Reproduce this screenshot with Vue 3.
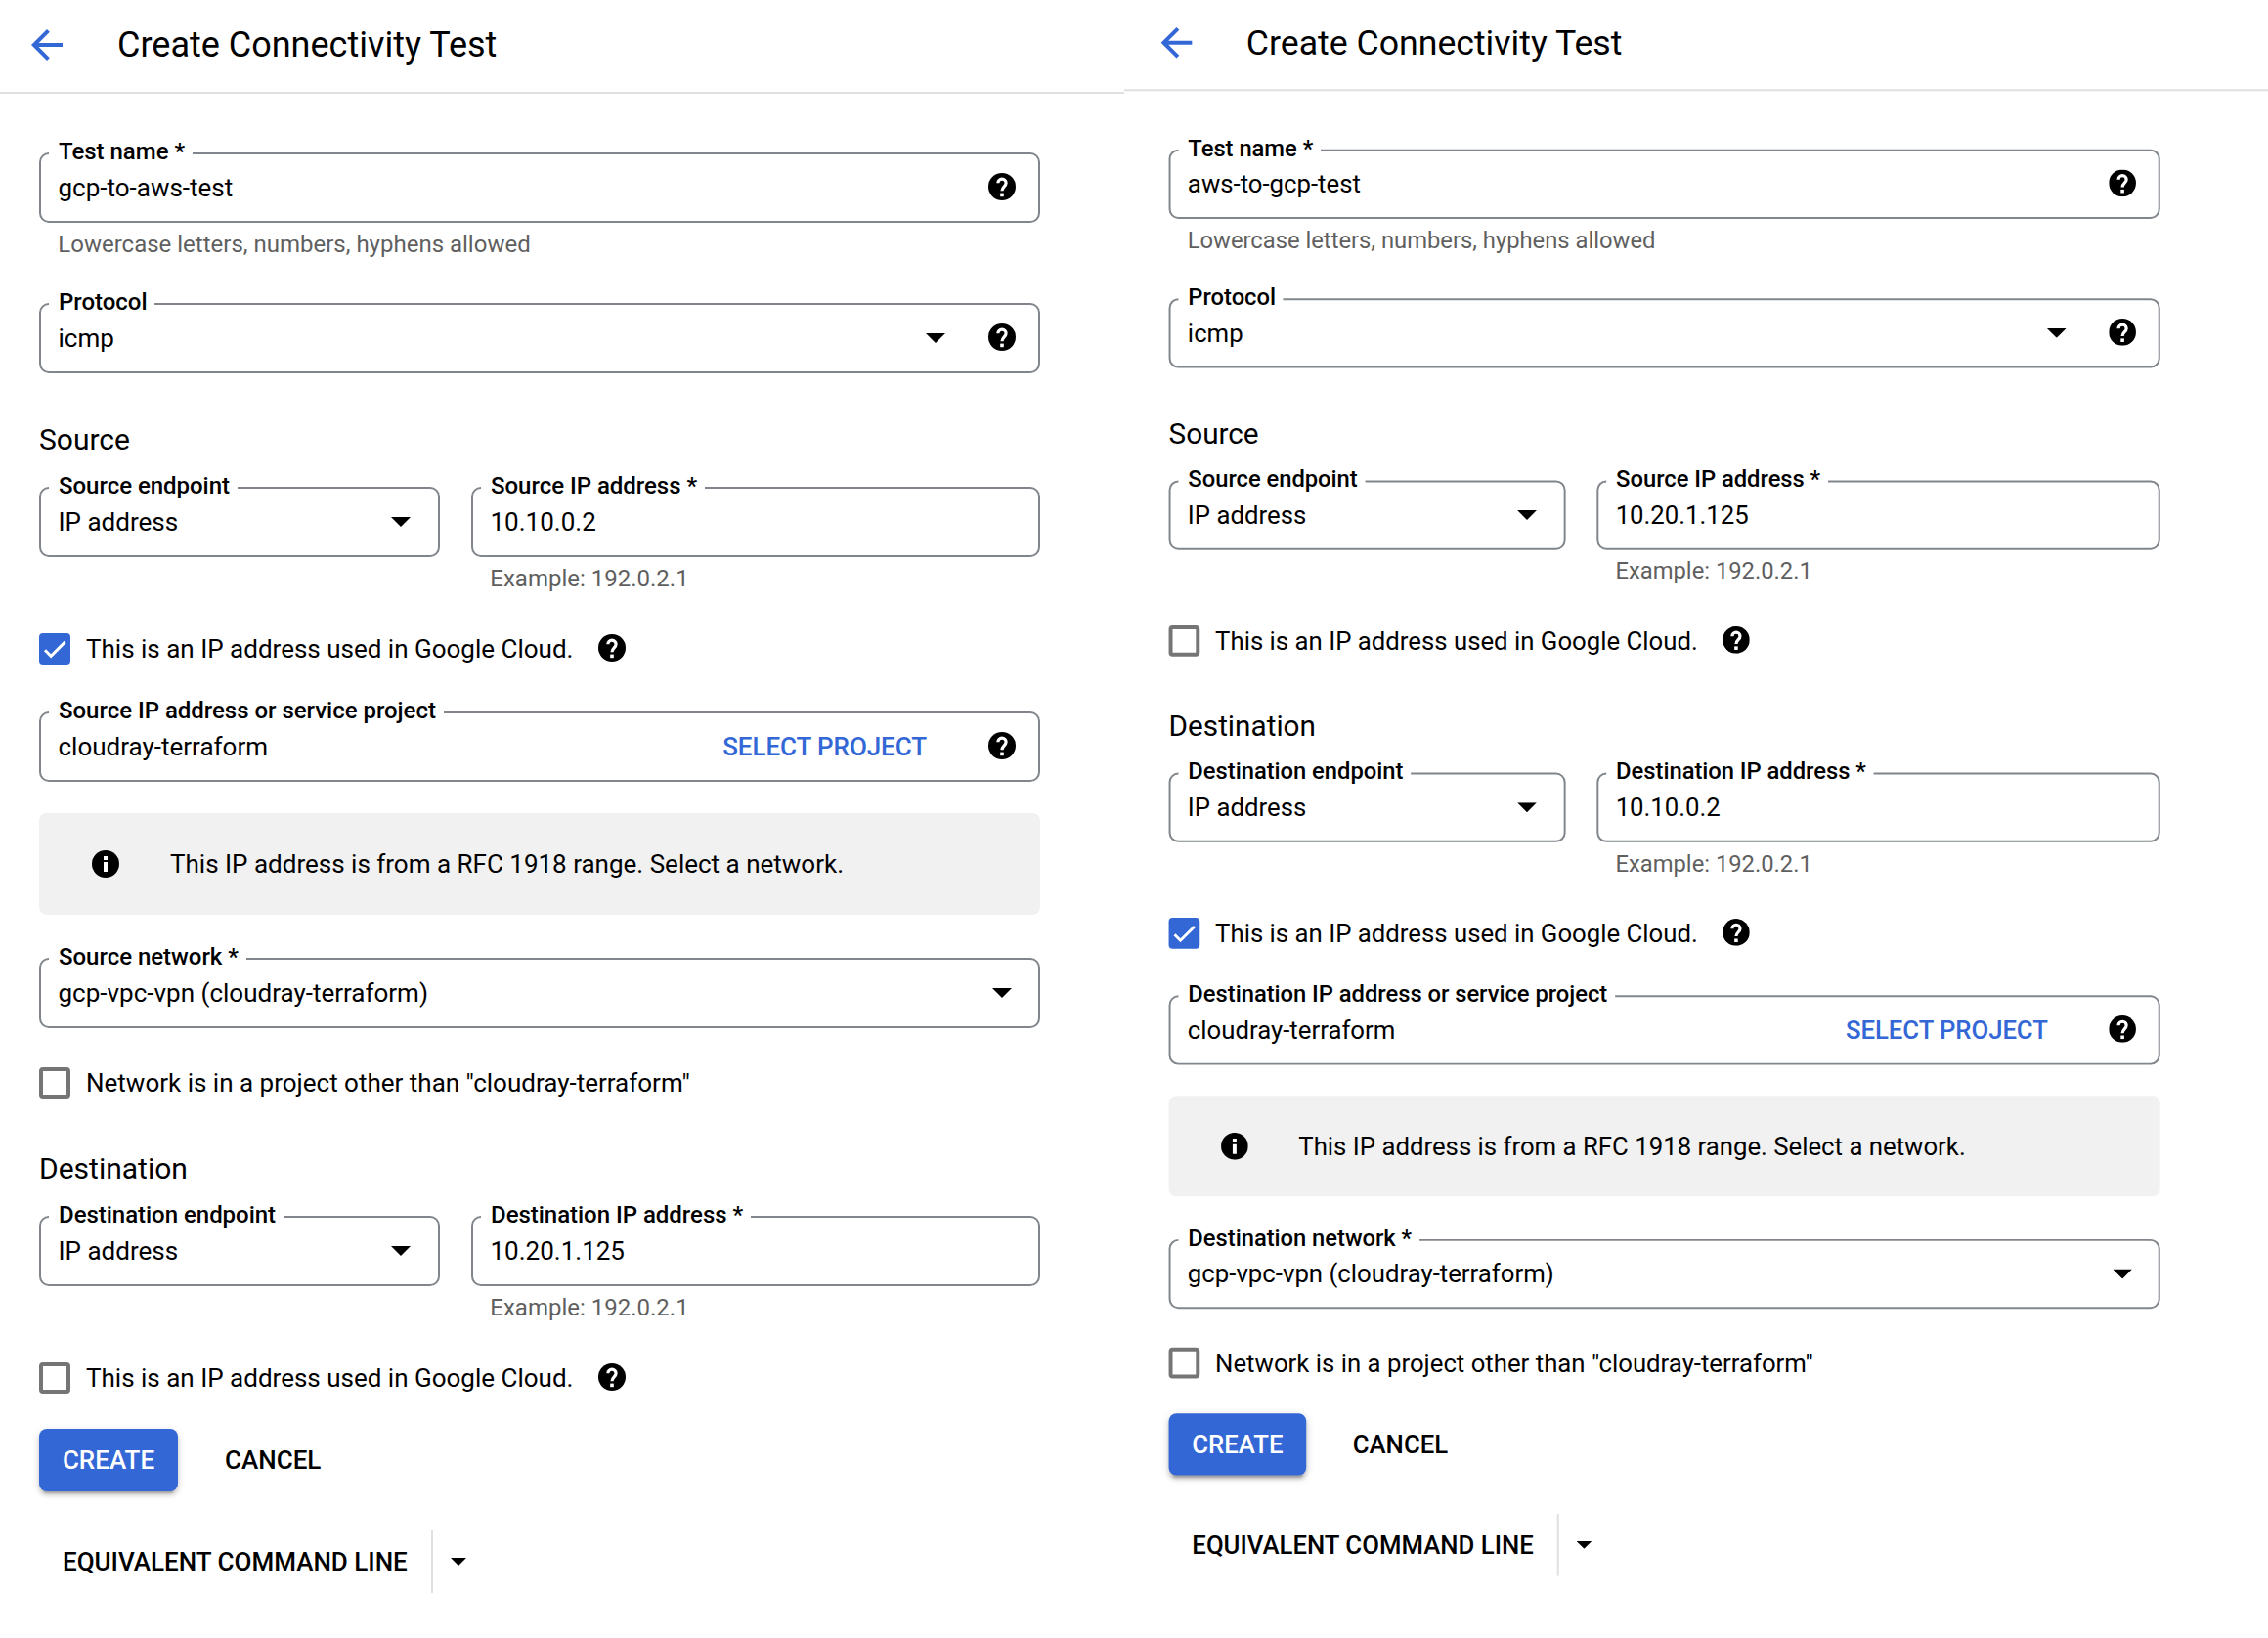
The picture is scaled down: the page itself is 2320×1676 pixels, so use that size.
<script setup>
import { h } from 'vue'

const HelpIcon = () =>
  h('svg', { viewBox: '0 0 28 28', width: 28, height: 28, style: 'display:block;flex:none' }, [
    h('circle', { cx: 14, cy: 14, r: 14, fill: '#000' }),
    h('path', {
      d: 'M9.9 10.3a4.1 4.1 0 0 1 8.2 0c0 3.3-4.1 3.9-4.1 7.9',
      fill: 'none',
      stroke: '#fff',
      'stroke-width': 3.2
    }),
    h('rect', { x: 12.2, y: 20.6, width: 3.6, height: 3.6, fill: '#fff' })
  ])

const field = (label, value, extra = {}) => ({ type: 'field', label, value, ...extra })
const endpoint = (side, ip) => ({ type: 'endpoint', side, ip })
const googleIp = (checked) => ({
  type: 'check',
  text: 'This is an IP address used in Google Cloud.',
  checked,
  help: true,
  after: 'group'
})
const networkRows = (side) => [
  field(`${side} IP address or service project`, 'cloudray-terraform', {
    select: true,
    help: true,
    after: 'check'
  }),
  { type: 'info', text: 'This IP address is from a RFC 1918 range. Select a network.' },
  field(`${side} network *`, 'gcp-vpc-vpn (cloudray-terraform)', { caret: true, after: 'info' }),
  {
    type: 'check',
    text: 'Network is in a project other than "cloudray-terraform"',
    checked: false,
    after: 'field'
  }
]
const baseRows = (name) => [
  field('Test name *', name, {
    help: true,
    hint: 'Lowercase letters, numbers, hyphens allowed',
    after: 'header'
  }),
  field('Protocol', 'icmp', { caret: true, help: true, after: 'hint' })
]

const panels = [
  {
    id: 'left',
    rows: [
      ...baseRows('gcp-to-aws-test'),
      { type: 'heading', text: 'Source', after: 'field' },
      endpoint('Source', '10.10.0.2'),
      googleIp(true),
      ...networkRows('Source'),
      { type: 'heading', text: 'Destination', after: 'check' },
      endpoint('Destination', '10.20.1.125'),
      googleIp(false)
    ]
  },
  {
    id: 'right',
    rows: [
      ...baseRows('aws-to-gcp-test'),
      { type: 'heading', text: 'Source', after: 'field' },
      endpoint('Source', '10.20.1.125'),
      googleIp(false),
      { type: 'heading', text: 'Destination', after: 'check' },
      endpoint('Destination', '10.10.0.2'),
      googleIp(true),
      ...networkRows('Destination')
    ]
  }
]
</script>

<template>
  <main class="page">
    <section v-for="panel in panels" :key="panel.id" class="panel" :class="panel.id">
      <div class="sheet">
        <header class="header">
          <svg class="back" viewBox="0 0 24 24" width="48" height="48">
            <path fill="#3367d6" d="M20 11H7.83l5.59-5.59L12 4l-8 8 8 8 1.41-1.41L7.83 13H20v-2z" />
          </svg>
          <h1>Create Connectivity Test</h1>
        </header>

        <div class="form">
          <template v-for="(row, i) in panel.rows" :key="i">
            <div v-if="row.type === 'field'" class="row" :class="'after-' + row.after">
              <div class="field">
                <label>{{ row.label }}</label>
                <span class="value">{{ row.value }}</span>
                <span v-if="row.select" class="select-project">SELECT PROJECT</span>
                <svg v-if="row.caret" class="caret" viewBox="0 0 20 10" width="20" height="10">
                  <path d="M0 0h20L10 10z" />
                </svg>
                <HelpIcon v-if="row.help" class="help" />
              </div>
              <p v-if="row.hint" class="hint">{{ row.hint }}</p>
            </div>

            <h2 v-else-if="row.type === 'heading'" :class="'after-' + row.after">{{ row.text }}</h2>

            <div v-else-if="row.type === 'endpoint'" class="pair">
              <div class="field kind">
                <label>{{ row.side }} endpoint</label>
                <span class="value">IP address</span>
                <svg class="caret" viewBox="0 0 20 10" width="20" height="10">
                  <path d="M0 0h20L10 10z" />
                </svg>
              </div>
              <div class="address">
                <div class="field">
                  <label>{{ row.side }} IP address *</label>
                  <span class="value">{{ row.ip }}</span>
                </div>
                <p class="hint">Example: 192.0.2.1</p>
              </div>
            </div>

            <div v-else-if="row.type === 'check'" class="check" :class="'after-' + row.after">
              <span class="box" :class="{ on: row.checked }">
                <svg v-if="row.checked" viewBox="0 0 32 32" width="32" height="32">
                  <path d="M6 17.3l6.1 6.1L26.6 8.9" fill="none" stroke="#fff" stroke-width="2.9" />
                </svg>
              </span>
              <span class="check-text">{{ row.text }}</span>
              <HelpIcon v-if="row.help" class="help" />
            </div>

            <div v-else class="info">
              <svg viewBox="0 0 28 28" width="28" height="28">
                <circle cx="14" cy="14" r="14" />
                <path fill="#fff" d="M12 6h4v4h-4zM12 12h4v10h-4z" />
              </svg>
              <span>{{ row.text }}</span>
            </div>
          </template>

          <div class="actions">
            <span class="create">CREATE</span>
            <span class="cancel">CANCEL</span>
          </div>
          <div class="command">
            <span class="command-text">EQUIVALENT COMMAND LINE</span>
            <svg viewBox="0 0 16 8" width="16" height="8"><path d="M0 0h16L8 8z" /></svg>
          </div>
        </div>
      </div>
    </section>
  </main>
</template>

<style>
body {
  margin: 0;
  background: #fff;
}
</style>

<style scoped>
.page {
  display: flex;
  width: 2320px;
  height: 1676px;
  overflow: hidden;
  background: #fff;
  color: #000;
  font: 400 26px/40px Roboto, sans-serif;
  white-space: nowrap;
}
.panel {
  flex: none;
  overflow: hidden;
}
.left {
  width: 1150px;
}
.right {
  width: 1170px;
}
.sheet {
  --inset: 0px;
  width: 1150px;
}
.right .sheet {
  --inset: 6px;
  width: 1182px;
  transform: translateY(-1.8px) scale(0.9904);
  transform-origin: 0 0;
}
.header {
  display: flex;
  align-items: center;
  box-sizing: border-box;
  height: 96px;
  padding: 0 0 2px calc(24px + var(--inset));
  border-bottom: 2px solid #e0e0e0;
}
.back {
  flex: none;
  margin-right: 48px;
}
h1,
h2,
p {
  margin: 0;
  font-weight: 400;
}
h1 {
  font-size: 36px;
  line-height: 48px;
}
h2 {
  font-size: 30px;
  line-height: 30px;
}
h2.after-field {
  margin-top: 53px;
}
h2.after-check {
  margin-top: 57px;
}
.form {
  width: 1024px;
  padding-left: calc(40px + var(--inset));
}
.row.after-header {
  padding-top: 60px;
}
.row.after-hint,
.row.after-check {
  margin-top: 48px;
}
.row.after-info {
  margin-top: 44px;
}
.field {
  position: relative;
  display: flex;
  align-items: center;
  box-sizing: border-box;
  height: 72px;
  padding: 0 23px 0 17.5px;
  border: 2px solid #80868b;
  border-radius: 10px;
}
.field label {
  position: absolute;
  top: -15px;
  left: 8px;
  padding: 0 8px 0 10px;
  background: #fff;
  font-size: 24px;
  font-weight: 500;
  line-height: 24px;
  letter-spacing: -0.03px;
}
.value {
  flex: 1;
}
.select-project {
  margin-right: 63px;
  color: #3367d6;
  font-weight: 500;
  letter-spacing: -0.08px;
}
.help {
  position: relative;
  top: -1px;
}
.caret {
  flex: none;
  margin-right: 4px;
}
.caret:has(+ .help) {
  margin-right: 44px;
}
.hint {
  margin-top: 10px;
  padding-left: 19.3px;
  color: #5f5f5f;
  font-size: 24px;
  line-height: 24px;
}
.pair {
  display: flex;
  gap: 32px;
  margin-top: 33px;
}
.kind {
  flex: none;
  width: 410px;
  padding-right: 24px;
}
.address {
  flex: 1;
}
.check {
  display: flex;
  align-items: center;
  height: 32px;
}
.check.after-group {
  margin-top: 44px;
}
.check.after-field {
  margin-top: 40px;
}
.box {
  box-sizing: border-box;
  width: 32px;
  height: 32px;
  margin-right: 16px;
  border: 4px solid #757575;
  border-radius: 4px;
}
.box.on {
  border: 0;
  background: #3367d6;
}
.box svg,
.info svg,
.command svg {
  display: block;
  flex: none;
}
.check-text {
  margin-right: 26px;
}
.info {
  display: flex;
  align-items: center;
  gap: 52px;
  box-sizing: border-box;
  height: 104px;
  margin-top: 32px;
  padding-left: 54px;
  border-radius: 8px;
  background: #f1f1f1;
}
.actions,
.command {
  display: flex;
  align-items: center;
  height: 64px;
  font-weight: 500;
  line-height: 64px;
}
.actions {
  margin-top: 36px;
}
.create {
  width: 142px;
  border-radius: 8px;
  background: #3367d6;
  box-shadow:
    0 6px 2px -4px rgba(0, 0, 0, 0.2),
    0 4px 4px rgba(0, 0, 0, 0.14),
    0 2px 10px rgba(0, 0, 0, 0.12);
  color: #fff;
  text-align: center;
}
.cancel {
  margin-left: 48px;
}
.command {
  margin-top: 40px;
}
.command-text {
  margin-right: 18px;
  padding: 0 24px;
  border-right: 2px solid #e0e0e0;
}
</style>
